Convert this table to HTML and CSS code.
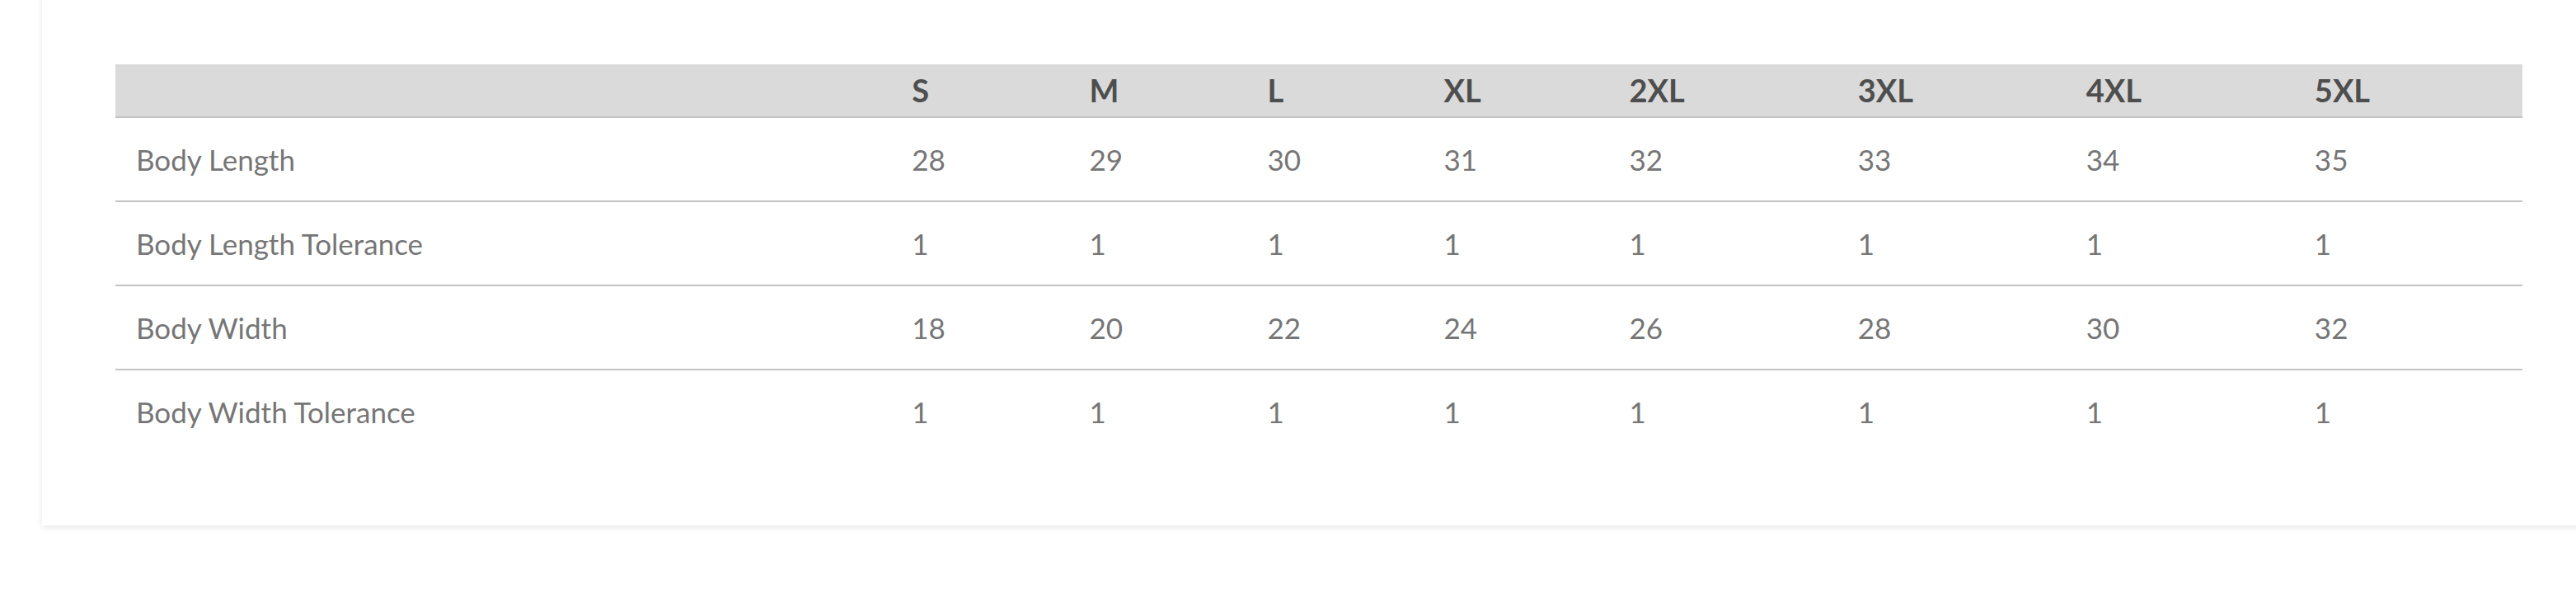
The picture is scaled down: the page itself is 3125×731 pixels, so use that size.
FILE: index.html
```html
<!DOCTYPE html>
<html lang="en">
<head>
<meta charset="utf-8">
<title>Size Chart</title>
<link rel="stylesheet" href="styles.css">
</head>
<body>
<div class="card">
  <table class="size-table">
    <colgroup>
      <col class="c-label">
      <col class="c-s">
      <col class="c-m">
      <col class="c-l">
      <col class="c-xl">
      <col class="c-wide">
      <col class="c-wide">
      <col class="c-wide">
      <col class="c-wide">
    </colgroup>
    <thead>
      <tr>
        <th></th>
        <th>S</th>
        <th>M</th>
        <th>L</th>
        <th>XL</th>
        <th>2XL</th>
        <th>3XL</th>
        <th>4XL</th>
        <th>5XL</th>
      </tr>
    </thead>
    <tbody>
      <tr>
        <td>Body Length</td>
        <td>28</td><td>29</td><td>30</td><td>31</td><td>32</td><td>33</td><td>34</td><td>35</td>
      </tr>
      <tr>
        <td>Body Length Tolerance</td>
        <td>1</td><td>1</td><td>1</td><td>1</td><td>1</td><td>1</td><td>1</td><td>1</td>
      </tr>
      <tr>
        <td>Body Width</td>
        <td>18</td><td>20</td><td>22</td><td>24</td><td>26</td><td>28</td><td>30</td><td>32</td>
      </tr>
      <tr>
        <td>Body Width Tolerance</td>
        <td>1</td><td>1</td><td>1</td><td>1</td><td>1</td><td>1</td><td>1</td><td>1</td>
      </tr>
    </tbody>
  </table>
</div>
</body>
</html>
```

FILE: styles.css
```css
html {
  overflow: hidden;
  background: #ffffff;
}

body {
  margin: 0;
  padding: 0 0 40px 0;
  background: #ffffff;
  font-family: "Lato", "Open Sans", "Liberation Sans", sans-serif;
}

.card {
  box-sizing: border-box;
  width: 3098px;
  margin: -12px 0 0 51px;
  padding: 90px 89px 88px 89px;
  background: #ffffff;
  box-shadow: 0 2px 8px rgba(0, 0, 0, 0.1);
}

.size-table {
  width: 2920px;
  table-layout: fixed;
  border-collapse: separate;
  border-spacing: 0;
}

.c-label { width: 941px; }
.c-s { width: 215px; }
.c-m { width: 216px; }
.c-l { width: 214px; }
.c-xl { width: 225px; }
.c-wide { width: 277px; }

.size-table th,
.size-table td {
  padding: 0 24px 0 25px;
  text-align: left;
  white-space: nowrap;
  border-bottom: 2px solid #c3c3c3;
}

.size-table th {
  background: #dadada;
  color: #4e4e4e;
  font-weight: 700;
  font-size: 38px;
  line-height: 63px;
}

.size-table td {
  color: #767676;
  font-weight: 400;
  font-size: 35px;
  line-height: 100px;
}

.size-table tbody tr:last-child td {
  border-bottom: none;
}
```
